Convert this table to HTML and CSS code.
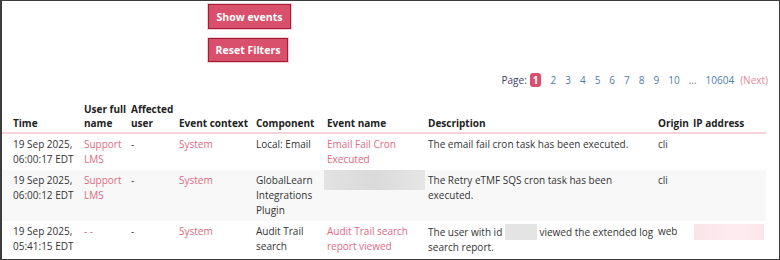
FILE: index.html
```html
<!DOCTYPE html>
<html lang="en">
<head>
    <meta charset="UTF-8">
    <meta name="viewport" content="width=device-width, initial-scale=1.0">
    <title>Logs</title>
    <link rel="stylesheet" href="styles.css">
</head>
<body>
    <div class="frame">
        <div class="filter-buttons">
            <button class="btn" id="showEvents">Show events</button>
            <button class="btn" id="resetFilters">Reset Filters</button>
        </div>

        <nav class="paging">
            <span class="paging-label">Page:</span>
            <span class="page current">1</span>
            <a class="page" href="#">2</a>
            <a class="page" href="#">3</a>
            <a class="page" href="#">4</a>
            <a class="page" href="#">5</a>
            <a class="page" href="#">6</a>
            <a class="page" href="#">7</a>
            <a class="page" href="#">8</a>
            <a class="page" href="#">9</a>
            <a class="page" href="#">10</a>
            <span class="page dots">...</span>
            <a class="page" href="#">10604</a>
            <a class="page next" href="#">(Next)</a>
        </nav>

        <table class="log-table">
            <colgroup>
                <col style="width:79px">
                <col style="width:47px">
                <col style="width:48px">
                <col style="width:77px">
                <col style="width:71px">
                <col style="width:101px">
                <col style="width:230px">
                <col style="width:35px">
                <col style="width:76px">
            </colgroup>
            <thead>
                <tr>
                    <th>Time</th>
                    <th>User full name</th>
                    <th>Affected user</th>
                    <th>Event context</th>
                    <th>Component</th>
                    <th>Event name</th>
                    <th>Description</th>
                    <th>Origin</th>
                    <th>IP address</th>
                </tr>
            </thead>
            <tbody>
                <tr>
                    <td>19 Sep 2025, 06:00:17 EDT</td>
                    <td><a href="#">Support LMS</a></td>
                    <td>-</td>
                    <td><a href="#">System</a></td>
                    <td>Local: Email</td>
                    <td><a href="#">Email Fail Cron Executed</a></td>
                    <td>The email fail cron task has been executed.</td>
                    <td>cli</td>
                    <td></td>
                </tr>
                <tr>
                    <td>19 Sep 2025, 06:00:12 EDT</td>
                    <td><a href="#">Support LMS</a></td>
                    <td>-</td>
                    <td><a href="#">System</a></td>
                    <td>GlobalLearn Integrations Plugin</td>
                    <td><div class="blur-cell"></div></td>
                    <td>The Retry eTMF SQS cron task has been executed.</td>
                    <td>cli</td>
                    <td></td>
                </tr>
                <tr>
                    <td>19 Sep 2025, 05:41:15 EDT</td>
                    <td><a href="#">- -</a></td>
                    <td>-</td>
                    <td><a href="#">System</a></td>
                    <td>Audit Trail search</td>
                    <td><a href="#">Audit Trail search report viewed</a></td>
                    <td>The user with id <span class="blur-id"></span> viewed the extended log search report.</td>
                    <td>web</td>
                    <td><div class="blur-ip"></div></td>
                </tr>
            </tbody>
        </table>
    </div>
</body>
</html>
```

FILE: styles.css
```css
html, body {
    margin: 0;
    background: #fff;
}
body {
    font-family: "Open Sans", "DejaVu Sans", sans-serif;
    font-size: 10px;
    color: #333;
}
.frame {
    box-sizing: border-box;
    width: 780px;
    height: 260px;
    border: 1px solid #3d3d3d;
    border-left-width: 2px;
    overflow: hidden;
    background: #fff;
}
.filter-buttons {
    display: flex;
    flex-direction: column;
    align-items: flex-start;
    gap: 9px;
    padding: 3px 0 0 206px;
}
.btn {
    font-family: inherit;
    font-size: 10.5px;
    font-weight: bold;
    color: #fff;
    background-color: #d9506c;
    border: 1px solid #a41c36;
    box-shadow: 0 0 0 1px #f3cdd5;
    padding: 0;
    height: 25px;
    white-space: nowrap;
    cursor: pointer;
}
#showEvents {
    width: 83px;
}
#resetFilters {
    width: 80px;
    height: 24px;
}
.paging {
    display: flex;
    justify-content: flex-end;
    align-items: center;
    gap: 9px;
    height: 14px;
    margin: 11px 11px 0 0;
    line-height: 14px;
}
.paging-label {
    color: #3b4266;
    margin-right: -6px;
}
.page {
    color: #4d7cae;
    text-decoration: none;
}
.page.current {
    color: #fff;
    background: #d9506c;
    border-radius: 3px;
    padding: 0 3px;
    font-weight: bold;
}
.page.dots {
    color: #777;
}
.page.next {
    color: #e7879a;
    margin-left: -3px;
}
.log-table {
    table-layout: fixed;
    border-collapse: collapse;
    width: 764px;
    margin-top: 12px;
}
.log-table th {
    text-align: left;
    vertical-align: bottom;
    font-weight: bold;
    color: #222;
    line-height: 14px;
    padding: 3px 0 2px 3px;
    border-bottom: 2px solid #f6d3da;
}
.log-table td {
    vertical-align: top;
    line-height: 15px;
    padding: 3px 0 3px 3px;
}
.log-table th:first-child,
.log-table td:first-child {
    padding-left: 11px;
}
.log-table tbody tr:nth-child(even) td {
    background: #f8f8f8;
}
.log-table a {
    color: #e06a83;
    text-decoration: none;
}
.blur-cell {
    height: 20px;
    margin: -3px 0 0 -3px;
    background: linear-gradient(90deg, #e2e2e2, #dadada 50%, #e6e6e6);
}
.blur-id {
    display: inline-block;
    width: 32px;
    height: 16px;
    vertical-align: -4px;
    background: #e4e4e4;
}
.blur-ip {
    width: 70px;
    height: 16px;
    margin-left: 1px;
    background: linear-gradient(90deg, #fbe4e8, #fdecef 60%, #fbe6ea);
}
```
